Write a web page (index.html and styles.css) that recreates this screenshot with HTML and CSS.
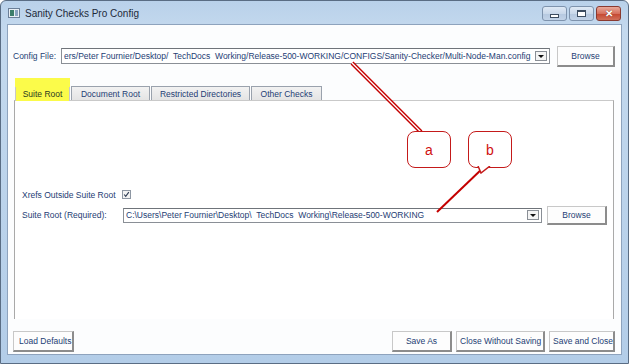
FILE: index.html
```html
<!DOCTYPE html>
<html>
<head>
<meta charset="utf-8">
<link rel="stylesheet" href="styles.css">
</head>
<body>
<div class="window">
  <div class="titlebar">
    <div class="appicon"><span class="ai-a"></span><span class="ai-b"></span></div>
    <div class="title">Sanity Checks Pro Config</div>
    <div class="controls">
      <div class="ctl"><span class="min-glyph"></span></div>
      <div class="ctl"><span class="max-glyph"></span></div>
      <div class="ctl close"><span class="x-glyph">✕</span></div>
    </div>
  </div>
  <div class="client">
    <div class="row config-row">
      <span class="label">Config File:</span>
      <div class="combo combo-config">
        <span class="combo-text">ers/Peter Fournier/Desktop/&nbsp; TechDocs&nbsp; Working/Release-500-WORKING/CONFIGS/Sanity-Checker/Multi-Node-Man.config</span>
        <span class="combo-btn"><span class="arrow"></span></span>
      </div>
      <button class="btn browse-top">Browse</button>
    </div>

    <div class="tabs">
      <div class="tab active"><span>Suite Root</span></div>
      <div class="tab">Document Root</div>
      <div class="tab">Restricted Directories</div>
      <div class="tab">Other Checks</div>
    </div>
    <div class="panel">
      <div class="spacer"></div>
      <div class="row xrefs-row">
        <span class="label">Xrefs Outside Suite Root</span>
        <span class="checkbox"><svg width="9" height="9" viewBox="0 0 9 9"><path d="M1.5 4.5 L3.5 7 L7.5 1.5" fill="none" stroke="#2c3a52" stroke-width="1.4"/></svg></span>
      </div>
      <div class="row root-row">
        <span class="label root-label">Suite Root (Required):</span>
        <div class="combo combo-root">
          <span class="combo-text">C:\Users\Peter Fournier\Desktop\&nbsp; TechDocs&nbsp; Working\Release-500-WORKING</span>
          <span class="combo-btn"><span class="arrow"></span></span>
        </div>
        <button class="btn browse-root">Browse</button>
      </div>
    </div>

    <div class="bottom">
      <button class="btn load">Load Defaults</button>
      <div class="grow"></div>
      <button class="btn saveas">Save As</button>
      <button class="btn cws">Close Without Saving</button>
      <button class="btn sac">Save and Close</button>
    </div>
  </div>

  <svg class="annot" width="629" height="364" viewBox="0 0 629 364">
    <line x1="352" y1="63" x2="421" y2="132" stroke="#c40000" stroke-width="4"/>
    <line x1="352" y1="63" x2="421" y2="132" stroke="#ffffff" stroke-width="1.3"/>
    <line x1="484" y1="167" x2="437" y2="212" stroke="#c40000" stroke-width="2"/>
  </svg>
  <div class="callout co-a">a</div>
  <div class="callout co-b">b</div>
  <svg class="tail" width="14" height="8" viewBox="0 0 14 8"><path d="M1 0 L4 7 L13 0" fill="#fff" stroke="#c41a1a" stroke-width="1.5"/></svg>
</div>
</body>
</html>
```

FILE: styles.css
```css
* { box-sizing: border-box; }
html, body { margin: 0; padding: 0; }
body {
  width: 629px;
  height: 364px;
  overflow: hidden;
  font-family: "Liberation Sans", Arial, sans-serif;
  font-size: 8.5px;
  color: #1e3d74;
}
.window {
  position: relative;
  width: 629px;
  height: 364px;
  display: flex;
  flex-direction: column;
  background: linear-gradient(180deg, #b9d1ea 0%, #c4d9ee 8%, #bed5ec 40%, #b3cde8 100%);
  border: 1px solid #5a6d84;
  border-radius: 6px 6px 0 0;
}
.titlebar {
  height: 23px;
  display: flex;
  align-items: center;
  padding: 0 0 0 7px;
}
.appicon {
  width: 12px;
  height: 10px;
  border: 1px solid #6b7f98;
  background: #e8eef4;
  display: flex;
  align-items: center;
  gap: 1px;
  padding: 1px;
  margin-top: 1px;
}
.ai-a { width: 4px; height: 6px; background: #3c7d6a; }
.ai-b { width: 4px; height: 6px; background: #8aa3c0; }
.title {
  margin-left: 5px;
  font-size: 10px;
  color: #1d2a3a;
  margin-top: 1px;
}
.controls {
  margin-left: auto;
  margin-right: 7px;
  display: flex;
  gap: 2px;
  margin-top: 2px;
}
.ctl {
  width: 25px;
  height: 15px;
  border: 1px solid #7e93ad;
  border-radius: 3px;
  background: linear-gradient(180deg, #dfe9f5 0%, #c9d8ea 50%, #b5c8df 51%, #c2d3e8 100%);
  display: flex;
  align-items: center;
  justify-content: center;
}
.ctl.close {
  border-color: #8a3a30;
  background: linear-gradient(180deg, #e9a99a 0%, #d6715e 50%, #c4462f 51%, #d0705a 100%);
  color: #fff;
}
.min-glyph {
  width: 9px; height: 4px;
  background: #fff;
  border: 1px solid #3c4c60;
  margin-top: 4px;
}
.max-glyph {
  width: 9px; height: 7px;
  border: 1px solid #3c4c60;
  border-top-width: 2px;
  background: #fff;
  box-shadow: inset 0 0 0 1px #fff;
}
.x-glyph {
  font-size: 10px;
  font-weight: bold;
  color: #fff;
  text-shadow: 0 0 1px #5a1a10;
  line-height: 1;
}
.client {
  flex: 1;
  margin: 0 6px 8px 6px;
  background: #fcfdfe;
  border: 1px solid #8ea3bd;
  display: flex;
  flex-direction: column;
  padding: 0 6px 0 5px;
}
.row { display: flex; align-items: center; }
.config-row {
  margin-top: 20px;
  height: 22px;
}
.label { white-space: nowrap; }
.combo {
  display: flex;
  align-items: center;
  height: 16px;
  border: 1px solid #8a8f96;
  border-top-color: #6f747a;
  background: #fff;
  padding: 0 2px 0 2px;
  overflow: hidden;
}
.combo-text {
  flex: 1;
  white-space: nowrap;
  overflow: hidden;
}
.combo-config { margin-left: 5px; width: 489px; }
.combo-btn {
  width: 12px;
  height: 10px;
  border: 1px solid #8a8f96;
  background: #f4f4f4;
  display: flex;
  align-items: center;
  justify-content: center;
  flex: none;
  margin-left: 3px;
}
.arrow {
  width: 0; height: 0;
  border-left: 3px solid transparent;
  border-right: 3px solid transparent;
  border-top: 3px solid #111;
}
.btn {
  font-family: inherit;
  font-size: 8.5px;
  color: #1e3d74;
  background: #fdfdfd;
  border: 1px solid #c8c8c8;
  border-right: 2px solid #8c8c8c;
  border-bottom: 2px solid #8c8c8c;
  height: 21px;
  padding: 0 5px;
  margin: 0;
  white-space: nowrap;
}
.browse-top { margin-left: 7px; width: 58px; }
.tabs {
  display: flex;
  margin-top: 18px;
  padding-left: 2px;
  height: 15px;
  align-items: flex-end;
  gap: 1px;
}
.tab {
  height: 14px;
  padding: 0 7px;
  border: 1px solid #9aa2ad;
  border-bottom: none;
  background: linear-gradient(180deg, #f2f2f2 0%, #e4e4e4 100%);
  display: flex;
  align-items: center;
  white-space: nowrap;
}
.tab:nth-child(2) { width: 79px; justify-content: center; }
.tab:nth-child(3) { width: 99px; justify-content: center; }
.tab:nth-child(4) { width: 71px; justify-content: center; }
.tab.active {
  position: relative;
  width: 55px;
  height: 15px;
  justify-content: center;
  background: #fbfb4a;
  border-color: #c8c8c8;
  color: #2b3a20;
  margin-bottom: -1px;
}
.tab.active::before {
  content: "";
  position: absolute;
  left: -1px; right: -1px;
  top: -9px; height: 9px;
  background: #fbfb4a;
}
.tab.active span { position: relative; z-index: 1; }
.panel {
  height: 219px;
  margin-left: 1px;
  margin-right: 1px;
  border: 1px solid #a9a9a9;
  border-top-color: #c9c9c9;
  border-bottom: none;
  background: #fff;
  display: flex;
  flex-direction: column;
  padding: 0 0 0 7px;
}
.spacer { height: 86px; }
.xrefs-row { height: 15px; }
.checkbox {
  width: 9px;
  height: 9px;
  margin-left: 6px;
  border: 1px solid #8e97a3;
  background: #f3f3f3;
  display: flex;
  align-items: center;
  justify-content: center;
}
.checkbox svg { width: 7px; height: 7px; }
.root-row { height: 22px; margin-top: 2px; }
.root-label { width: 101px; }
.combo-root { width: 419px; height: 15px; }
.combo-root .combo-btn { height: 10px; }
.browse-root { margin-left: 5px; width: 60px; height: 19px; }
.bottom {
  display: flex;
  align-items: center;
  margin-top: auto;
  margin-bottom: 2px;
  gap: 4px;
}
.grow { flex: 1; }
.load { width: 61px; }
.saveas { width: 60px; }
.cws { width: 89px; padding: 0 3px; }
.sac { width: 66px; padding: 0 3px; }
.annot {
  position: absolute;
  left: -1px;
  top: -1px;
  pointer-events: none;
}
.callout {
  position: absolute;
  width: 44px;
  height: 37px;
  border: 1.5px solid #c41a1a;
  border-radius: 8px;
  background: #fff;
  color: #d01010;
  font-size: 14px;
  display: flex;
  align-items: center;
  justify-content: center;
}
.co-a { left: 406px; top: 130px; }
.co-b { left: 467px; top: 130px; }
.tail {
  position: absolute;
  left: 476px;
  top: 165px;
}
```
